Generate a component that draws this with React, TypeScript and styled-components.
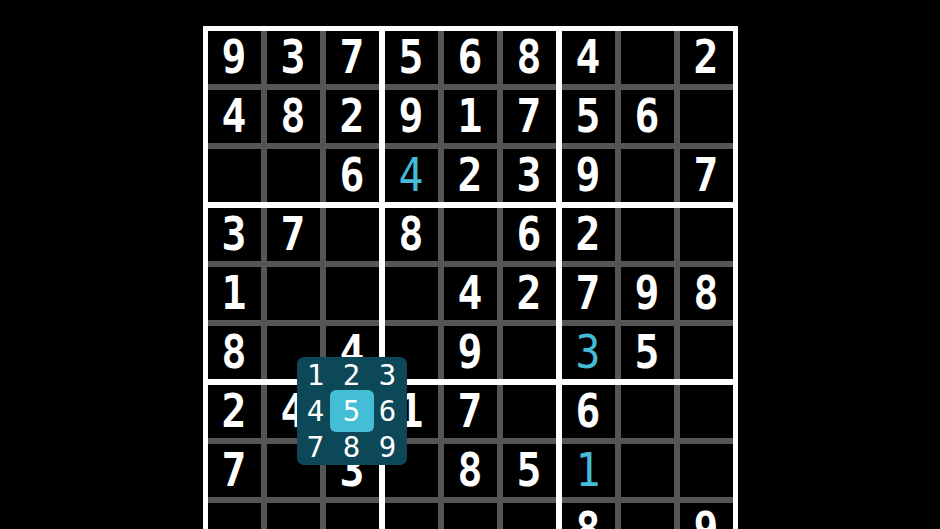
import React from 'react';
import styled, { createGlobalStyle } from 'styled-components';

const GlobalStyle = createGlobalStyle`
  html, body {
    margin: 0;
    padding: 0;
    background: #000;
    overflow: hidden;
  }
`;

const Page = styled.div`
  display: flex;
  justify-content: center;
  padding-top: 26px;
  height: 529px;
  box-sizing: border-box;
`;

const Board = styled.div`
  position: relative;
  display: grid;
  grid-template-columns: repeat(3, auto);
  gap: 6px;
  padding: 5px;
  background: #fff;
  align-self: flex-start;
`;

const Box = styled.div`
  display: grid;
  grid-template-columns: repeat(3, 53px);
  grid-auto-rows: 53px;
  gap: 6px;
  background: #555;
`;

const Cell = styled.div`
  display: flex;
  align-items: center;
  justify-content: center;
  background: #000;
`;

const Digit = styled.span<{ $entered: boolean }>`
  display: inline-block;
  color: ${(p) => (p.$entered ? '#44bcd5' : '#fff')};
  font-family: 'DejaVu Sans Mono', 'Liberation Mono', monospace;
  font-weight: ${(p) => (p.$entered ? 400 : 700)};
  font-size: 46px;
  line-height: 53px;
  transform: scaleX(0.9);
`;

const Picker = styled.div`
  position: absolute;
  left: 94px;
  top: 331px;
  width: 110px;
  height: 108px;
  box-sizing: border-box;
  padding: 0 1px;
  display: grid;
  grid-template-columns: repeat(3, 36px);
  grid-auto-rows: 36px;
  background: #0d4858;
  border-radius: 7px;
`;

const Choice = styled.div<{ $active: boolean }>`
  display: flex;
  align-items: center;
  justify-content: center;
  color: #fff;
  font-family: 'DejaVu Sans Mono', 'Liberation Mono', monospace;
  font-size: 29px;
  line-height: 1;
  border-radius: 6px;
  margin: ${(p) => (p.$active ? '-3px -4px' : '0')};
  background: ${(p) => (p.$active ? '#44bed7' : 'transparent')};
`;

const puzzle = [
  '937568402',
  '482917560',
  '006423907',
  '370806200',
  '100042798',
  '804090350',
  '240170600',
  '703085100',
  '000000809',
];

const entered = new Set(['2,3', '5,6', '7,6']);

const App = (): JSX.Element => (
  <>
    <GlobalStyle />
    <Page>
      <Board>
        {Array.from({ length: 9 }, (_, b) => {
          const br = Math.floor(b / 3) * 3;
          const bc = (b % 3) * 3;
          return (
            <Box key={b}>
              {Array.from({ length: 9 }, (__, i) => {
                const r = br + Math.floor(i / 3);
                const c = bc + (i % 3);
                const v = puzzle[r][c];
                return (
                  <Cell key={i}>
                    {v !== '0' && <Digit $entered={entered.has(`${r},${c}`)}>{v}</Digit>}
                  </Cell>
                );
              })}
            </Box>
          );
        })}
        <Picker>
          {[1, 2, 3, 4, 5, 6, 7, 8, 9].map((n) => (
            <Choice key={n} $active={n === 5}>{n}</Choice>
          ))}
        </Picker>
      </Board>
    </Page>
  </>
);

export default App;
